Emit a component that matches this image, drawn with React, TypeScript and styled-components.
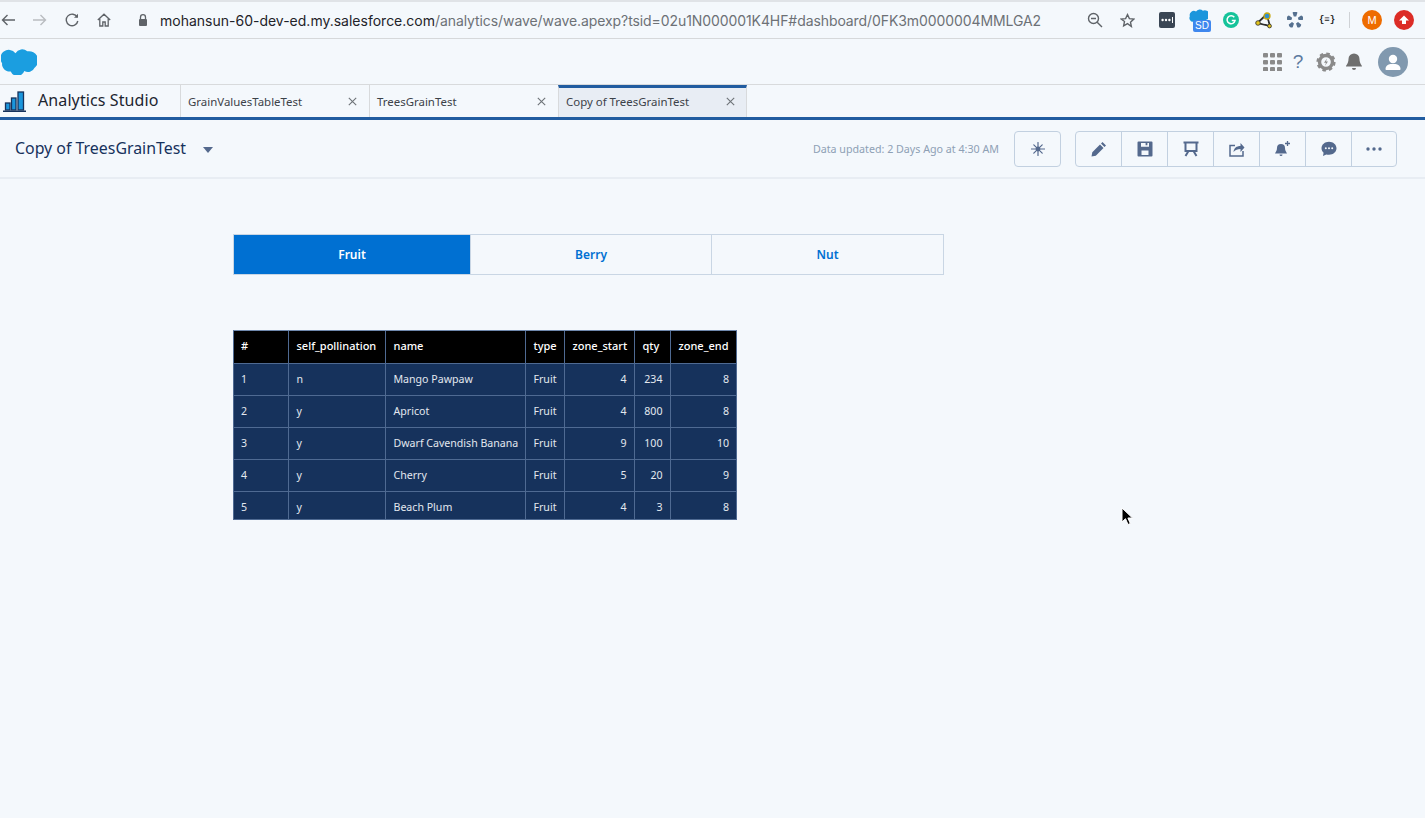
import React from 'react';
import styled, { createGlobalStyle } from 'styled-components';

const UI_FONT = '"Noto Sans", "Open Sans", sans-serif';

const GlobalStyle = createGlobalStyle`
  html, body {
    margin: 0;
    padding: 0;
    background: #f4f8fc;
  }
  * { box-sizing: border-box; }
`;

const Page = styled.div`
  position: relative;
  width: 1425px;
  height: 818px;
  overflow: hidden;
  background: #f4f8fc;
  font-family: ${UI_FONT};
`;

const BrowserBar = styled.div`
  height: 39px;
  display: flex;
  align-items: center;
  border-top: 2px solid #e0e3e7;
  border-bottom: 1px solid #d6d8da;
  padding-right: 5px;
`;

const NavGroup = styled.div`
  display: flex;
  margin-left: -8px;
`;

const Slot = styled.div`
  width: 32px;
  height: 32px;
  display: flex;
  align-items: center;
  justify-content: center;
  flex: none;
`;

const Lock = styled.svg`
  margin-left: 17px;
  margin-right: 11px;
  flex: none;
`;

const Url = styled.div`
  font-family: "Inter", sans-serif;
  font-size: 14px;
  color: #1f2329;
  white-space: nowrap;
  flex: 1;

  span {
    color: #6d7176;
    letter-spacing: -0.085px;
  }
`;

const ExtensionGroup = styled.div`
  display: flex;
  align-items: center;
  margin-left: 8px;
`;

const ExtSeparator = styled.div`
  width: 1px;
  height: 16px;
  background: #cfd2d6;
  margin: 0 6px;
`;

const SdWrap = styled.div`
  position: relative;
  width: 26px;
  height: 26px;
  margin-left: 4px;
`;

const SdCloud = styled.svg`
  position: absolute;
  left: 0;
  top: 2px;
`;

const SdBadge = styled.span`
  position: absolute;
  left: 5px;
  top: 13px;
  width: 18px;
  height: 12px;
  border-radius: 2px;
  background: #3f87ee;
  color: #fff;
  font: 10px/12px "Liberation Sans", sans-serif;
  text-align: center;
`;

const JsonMark = styled.span`
  font: 700 9px "Liberation Mono", monospace;
  color: #222;
  white-space: nowrap;
`;

const Avatar = styled.div<{ $bg: string }>`
  width: 20px;
  height: 20px;
  border-radius: 50%;
  background: ${(p) => p.$bg};
  color: #fff;
  font: 11px/20px "Liberation Sans", sans-serif;
  text-align: center;
`;

const UploadArrow = styled.svg`
  margin-top: 5px;
`;

const OrgHeader = styled.div`
  height: 46px;
  display: flex;
  align-items: center;
  justify-content: space-between;
  border-bottom: 1px solid #d8dadc;
  padding: 0 17px 0 1px;
`;

const OrgActions = styled.div`
  display: flex;
  align-items: center;
`;

const OrgIcon = styled.div<{ $w: number }>`
  width: ${(p) => p.$w}px;
  display: flex;
  justify-content: center;
  align-items: center;
  color: #8a8a8a;
`;

const HelpMark = styled.span`
  font: 19px/1 "Liberation Sans", sans-serif;
  color: #5d7a9f;
`;

const UserBubble = styled.div`
  width: 30px;
  height: 30px;
  margin-left: 11px;
  border-radius: 50%;
  background: #8199af;
  display: flex;
  align-items: center;
  justify-content: center;
`;

const TabBar = styled.div`
  height: 35px;
  display: flex;
  border-bottom: 3px solid #215ca0;
`;

const Brand = styled.div`
  width: 180px;
  display: flex;
  align-items: center;
  padding-left: 3px;
  flex: none;
`;

const BrandName = styled.span`
  margin-left: 12px;
  padding-bottom: 2px;
  font-size: 16px;
  letter-spacing: 0.1px;
  color: #1c2530;
`;

const Tab = styled.div<{ $active?: boolean }>`
  width: 189px;
  display: flex;
  align-items: center;
  justify-content: space-between;
  padding: ${(p) => (p.$active ? '0 11px 3px 7px' : '0 12px 0 7px')};
  border-left: 1px solid #d8dadc;
  font-size: 11.45px;
  color: #3c4249;
  background: ${(p) => (p.$active ? '#e8edf4' : 'transparent')};
  ${(p) => p.$active && 'border-top: 3px solid #215ca0; border-right: 1px solid #d8dadc;'}
`;

const CloseMark = styled.svg`
  flex: none;
`;

const DashHeader = styled.div`
  height: 59px;
  display: flex;
  align-items: center;
  padding: 0 28px 0 15px;
  border-bottom: 2px solid #e8edf3;
`;

const DashTitle = styled.div`
  font-size: 15.9px;
  color: #16325c;
  padding-bottom: 2px;
`;

const TitleCaret = styled.div`
  width: 0;
  height: 0;
  margin-left: 17px;
  margin-top: 3px;
  border-left: 5px solid transparent;
  border-right: 5px solid transparent;
  border-top: 6px solid #54698d;
`;

const Updated = styled.div`
  margin-left: auto;
  margin-right: 15px;
  margin-top: 1px;
  font-size: 10.7px;
  color: #8ea0b5;
`;

const ButtonGroup = styled.div<{ $gap?: number }>`
  display: flex;
  height: 36px;
  margin-right: ${(p) => p.$gap ?? 0}px;
  border: 1px solid #c2d0e0;
  border-radius: 4px;
`;

const ActionButton = styled.div`
  width: 46px;
  display: flex;
  align-items: center;
  justify-content: center;
  color: #54698d;
  border-left: 1px solid #c2d0e0;

  &:first-child {
    border-left: 0;
    width: 45px;
  }

  &:last-child:not(:first-child) {
    width: 45px;
  }
`;

const Content = styled.main`
  padding: 55px 0 0 233px;
`;

const Toggle = styled.div`
  display: flex;
  width: 711px;
  height: 41px;
  border: 1px solid #c9d6e4;
`;

const ToggleItem = styled.div<{ $active?: boolean; $w: number }>`
  width: ${(p) => p.$w}px;
  display: flex;
  align-items: center;
  justify-content: center;
  font-size: 12px;
  font-weight: 600;
  color: ${(p) => (p.$active ? '#ffffff' : '#0070d2')};
  background: ${(p) => (p.$active ? '#0070d2' : 'transparent')};
  border-left: ${(p) => (p.$active ? '0' : '1px solid #c9d6e4')};
`;

const TableClip = styled.div`
  width: 504px;
  height: 190px;
  margin-top: 55px;
  overflow: hidden;
  border: 1px solid #4f6a92;
  border-top-color: #6f88ad;
`;

const Grid = styled.table`
  border-collapse: collapse;
  table-layout: fixed;
  width: 502px;
`;

const HeadCell = styled.th`
  height: 32px;
  padding: 0 7px 2px 8px;
  background: #000;
  color: #fff;
  font-size: 11px;
  font-weight: 500;
  text-align: left;
  white-space: nowrap;
  border-left: 1px solid #4f6a92;
  border-bottom: 1px solid #4f6a92;

  &:first-child { border-left: 0; padding-left: 7px; }
`;

const BodyCell = styled.td<{ $num?: boolean }>`
  height: 32px;
  padding: 0 7px 0 8px;
  background: #16325c;
  color: #e3e8ef;
  font-size: 10.6px;
  text-align: ${(p) => (p.$num ? 'right' : 'left')};
  white-space: nowrap;
  border-left: 1px solid #4f6a92;
  border-bottom: 1px solid #4f6a92;

  &:first-child { border-left: 0; padding-left: 7px; }
`;

const Cursor = styled.svg`
  position: absolute;
  left: 1121px;
  top: 507px;
`;

const columns = ['#', 'self_pollination', 'name', 'type', 'zone_start', 'qty', 'zone_end'];
const colWidths = [54, 97, 140, 39, 70, 36, 66];
const rows: [string, string, string, string, number, number, number][] = [
  ['1', 'n', 'Mango Pawpaw', 'Fruit', 4, 234, 8],
  ['2', 'y', 'Apricot', 'Fruit', 4, 800, 8],
  ['3', 'y', 'Dwarf Cavendish Banana', 'Fruit', 9, 100, 10],
  ['4', 'y', 'Cherry', 'Fruit', 5, 20, 9],
  ['5', 'y', 'Beach Plum', 'Fruit', 4, 3, 8],
];

const Close = () => (
  <CloseMark width="9" height="9" viewBox="0 0 9 9">
    <path d="M0.8 0.8l7.4 7.4M8.2 0.8L0.8 8.2" stroke="#6e7378" strokeWidth="1.1" />
  </CloseMark>
);

const Browser = () => (
  <BrowserBar>
    <NavGroup>
      <Slot>
        <svg width="14" height="12" viewBox="0 0 14 12" fill="none" stroke="#5f6368" strokeWidth="1.4">
          <path d="M14 6H1.5M6.5 1L1.5 6l5 5" />
        </svg>
      </Slot>
      <Slot>
        <svg width="14" height="12" viewBox="0 0 14 12" fill="none" stroke="#b9bcc0" strokeWidth="1.4">
          <path d="M0 6h12.5M7.5 1l5 5-5 5" />
        </svg>
      </Slot>
      <Slot>
        <svg width="14" height="14" viewBox="0 0 14 14" fill="none" stroke="#5f6368" strokeWidth="1.4">
          <path d="M12.2 4.2A5.8 5.8 0 1 0 12.8 8" />
          <path d="M13 0.8v4h-4" fill="#5f6368" stroke="none" />
        </svg>
      </Slot>
      <Slot>
        <svg width="14" height="14" viewBox="0 0 14 14" fill="none" stroke="#5f6368" strokeWidth="1.3">
          <path d="M0.8 7L7 1.2 13.2 7M2.8 5.8V13h3V9h2.4v4h3V5.8" />
        </svg>
      </Slot>
    </NavGroup>
    <Lock width="12" height="14" viewBox="0 0 12 14">
      <path d="M3.5 6V4.2a2.5 2.5 0 0 1 5 0V6" fill="none" stroke="#5f6368" strokeWidth="1.3" />
      <rect x="2" y="6" width="8" height="7" rx="1" fill="#5f6368" />
    </Lock>
    <Url>
      mohansun-60-dev-ed.my.salesforce.com
      <span>/analytics/wave/wave.apexp?tsid=02u1N000001K4HF#dashboard/0FK3m0000004MMLGA2</span>
    </Url>
    <Slot>
      <svg width="16" height="16" viewBox="0 0 16 16" fill="none" stroke="#5f6368" strokeWidth="1.4">
        <circle cx="6.5" cy="6.5" r="5" />
        <path d="M10.2 10.2L15 15M4 6.5h5" />
      </svg>
    </Slot>
    <Slot>
      <svg width="15" height="15" viewBox="0 0 24 24" fill="none" stroke="#5f6368" strokeWidth="2.2">
        <path d="M12 2.5l3 6.4 7 .9-5.2 4.8 1.4 7L12 17.1l-6.200 3.500 1.400-7L2 9.800l7-.9z" />
      </svg>
    </Slot>
    <ExtensionGroup>
      <Slot>
        <svg width="16" height="16" viewBox="0 0 16 16">
          <rect width="16" height="16" rx="2" fill="#3a4654" />
          <circle cx="3.600" cy="8" r="1.200" fill="#fff" />
          <circle cx="7" cy="8" r="1.200" fill="#fff" />
          <circle cx="10.400" cy="8" r="1.200" fill="#fff" />
          <rect x="13" y="5" width="1" height="6" fill="#fff" />
        </svg>
      </Slot>
      <Slot>
        <SdWrap>
          <SdCloud width="20" height="15" viewBox="3 0 30 23">
            <path d="M15 4a6.500 6.500 0 0 1 10.500-1.200A7.500 7.500 0 1 1 30 17a5.800 5.800 0 0 1-7.500 2.400 6.500 6.500 0 0 1-12 .3A6 6 0 0 1 5.500 11 6.300 6.300 0 0 1 15 4z" fill="#1b96dc" />
          </SdCloud>
          <SdBadge>SD</SdBadge>
        </SdWrap>
      </Slot>
      <Slot>
        <svg width="16" height="16" viewBox="0 0 16 16">
          <circle cx="8" cy="8" r="8" fill="#15c39a" />
          <path d="M11.300 5.300A4 4 0 1 0 12 8.600H8.800" fill="none" stroke="#fff" strokeWidth="1.500" />
        </svg>
      </Slot>
      <Slot>
        <svg width="17" height="17" viewBox="0 0 17 17" fill="none">
          <path d="M2.500 11L11.500 2.500 15 14z" stroke="#2d2d2d" strokeWidth="1.800" />
          <path d="M4.500 10.800l6.500-6 2.400 7.600z" fill="#f4f8fc" />
          <circle cx="12" cy="4" r="3" fill="#2f8fcf" stroke="#c9a80f" strokeWidth="1.300" />
          <circle cx="3" cy="11" r="2.300" fill="#e3c51c" stroke="#2d2d2d" strokeWidth=".8" />
          <circle cx="14.500" cy="14" r="1.900" fill="#e3c51c" stroke="#2d2d2d" strokeWidth=".8" />
        </svg>
      </Slot>
      <Slot>
        <svg width="16" height="16" viewBox="0 0 16 16" fill="#55708f">
          {[0, 72, 144, 216, 288].map((a) => (
            <g key={a} transform={`rotate(${a} 8 8)`}>
              <path d="M5.600 0.800a2.800 2.800 0 0 1 4.800 0L9.200 4.600H6.800z" />
            </g>
          ))}
        </svg>
      </Slot>
      <Slot>
        <JsonMark>{'{≡}'}</JsonMark>
      </Slot>
      <ExtSeparator />
      <Slot>
        <Avatar $bg="#ee6c00">M</Avatar>
      </Slot>
      <Slot>
        <Avatar $bg="#dc2c26">
          <UploadArrow width="10" height="10" viewBox="0 0 10 10">
            <path d="M5 0.500L10 5.500H7v3.500H3V5.500H0z" fill="#fff" />
          </UploadArrow>
        </Avatar>
      </Slot>
    </ExtensionGroup>
  </BrowserBar>
);

const OrgBar = () => (
  <OrgHeader>
    <svg width="36" height="26" viewBox="3 1 30 22">
      <path d="M15 4.500a6.500 6.500 0 0 1 10-1.500 7.800 7.800 0 0 1 6 14 5.800 5.800 0 0 1-8.500 2.600 6.200 6.200 0 0 1-11.500 .4A6.300 6.300 0 0 1 3.700 13 6.400 6.400 0 0 1 15 4.500z" fill="#1b9ee0" />
    </svg>
    <OrgActions>
      <OrgIcon $w={26}>
        <svg width="19" height="18" viewBox="0 0 19 18" fill="#8a8a8a">
          {[0, 7, 14].map((y) =>
            [0, 7, 14].map((x) => <rect key={`${x}-${y}`} x={x} y={y} width="5" height="4.500" rx="1" />),
          )}
        </svg>
      </OrgIcon>
      <OrgIcon $w={26}>
        <HelpMark>?</HelpMark>
      </OrgIcon>
      <OrgIcon $w={30}>
        <svg width="20" height="20" viewBox="0 0 20 20">
          <circle cx="10" cy="10" r="6.500" fill="none" stroke="#8a8a8a" strokeWidth="3.400" />
          <circle cx="10" cy="10" r="8.400" fill="none" stroke="#8a8a8a" strokeWidth="2.400" strokeDasharray="3.500 3.100" />
          <path d="M11 6.500L8 10.800h2l-1 3 3-4.300h-2z" fill="#8a8a8a" />
        </svg>
      </OrgIcon>
      <OrgIcon $w={26}>
        <svg width="18" height="18" viewBox="0 0 18 18" fill="#6f6f6f">
          <path d="M9 0.500a5.500 5.500 0 0 0-5.500 5.500c0 4.500-2.500 6-2.500 7.500h16c0-1.500-2.500-3-2.500-7.500A5.500 5.500 0 0 0 9 0.500z" />
          <path d="M7 15h4a2 2 0 0 1-4 0z" />
        </svg>
      </OrgIcon>
      <UserBubble>
        <svg width="18" height="18" viewBox="0 0 18 18" fill="#fff">
          <circle cx="9" cy="6" r="4.200" />
          <path d="M1.500 16c0-3 2.500-4.500 5-5h5c2.500 .5 5 2 5 5 0 .6-.4 1-1 1h-13c-.6 0-1-.4-1-1z" />
        </svg>
      </UserBubble>
    </OrgActions>
  </OrgHeader>
);

const Tabs = () => (
  <TabBar>
    <Brand>
      <svg width="23" height="23" viewBox="0 0 23 23">
        <rect x="2.500" y="13" width="4.500" height="7" fill="#1b96dc" stroke="#16325c" strokeWidth="1.300" />
        <rect x="8.500" y="8" width="4.500" height="12" fill="#1b96dc" stroke="#16325c" strokeWidth="1.300" />
        <rect x="15" y="2" width="5.500" height="18" fill="#1b96dc" stroke="#16325c" strokeWidth="1.300" />
        <rect x="0" y="20.500" width="23" height="1.500" fill="#16325c" />
      </svg>
      <BrandName>Analytics Studio</BrandName>
    </Brand>
    <Tab>
      GrainValuesTableTest
      <Close />
    </Tab>
    <Tab>
      TreesGrainTest
      <Close />
    </Tab>
    <Tab $active>
      Copy of TreesGrainTest
      <Close />
    </Tab>
  </TabBar>
);

const DashboardHeader = () => (
  <DashHeader>
    <DashTitle>Copy of TreesGrainTest</DashTitle>
    <TitleCaret />
    <Updated>Data updated: 2 Days Ago at 4:30 AM</Updated>
    <ButtonGroup $gap={14}>
      <ActionButton>
        <svg width="14" height="14" viewBox="0 0 14 14" stroke="#54698d" strokeWidth="1.200" strokeLinecap="round">
          <path d="M7 .5v13M.5 7h13M2.800 2.800l8.400 8.400M11.200 2.800l-8.400 8.400" />
          <circle cx="7" cy="7" r="2.400" fill="#54698d" stroke="none" />
        </svg>
      </ActionButton>
    </ButtonGroup>
    <ButtonGroup>
      <ActionButton>
        <svg width="16" height="16" viewBox="0 0 16 16" fill="#54698d">
          <path d="M11.500 1L15 4.500 13.500 6 10 2.500zM9 3.500L12.500 7l-7.700 7.700L0.500 15.500l.8-4.300z" />
        </svg>
      </ActionButton>
      <ActionButton>
        <svg width="16" height="16" viewBox="0 0 16 16" fill="#54698d">
          <path d="M1.500 0.500h13a1 1 0 0 1 1 1v13a1 1 0 0 1-1 1h-13a1 1 0 0 1-1-1v-13a1 1 0 0 1 1-1zM4 2v3.700h8V2h-1.600v2.200H8.600V2zM4.500 9.500v4.500h7V9.500z" fillRule="evenodd" />
        </svg>
      </ActionButton>
      <ActionButton>
        <svg width="16" height="16" viewBox="0 0 16 16" fill="none" stroke="#54698d" strokeWidth="2">
          <path d="M0.500 1.500h15M2.500 1.500v8.500h11V1.500M5.500 10l-3 5M10.500 10l3 5" />
        </svg>
      </ActionButton>
      <ActionButton>
        <svg width="16" height="16" viewBox="0 0 16 16" fill="none" stroke="#54698d" strokeWidth="1.500">
          <path d="M6 4.500H1v10.500h13v-5" />
          <path d="M4.500 11c.5-4 3-6 7-6V2l4 4.500-4 4.500V8c-3 0-5 .8-7 3z" fill="#54698d" stroke="none" />
        </svg>
      </ActionButton>
      <ActionButton>
        <svg width="17" height="16" viewBox="0 0 17 16" fill="#54698d">
          <path d="M7 3a4 4 0 0 0-4 4c0 3-1.500 4-2 5.500h12c-.5-1.500-2-2.500-2-5.500a4 4 0 0 0-4-4zM5.500 13.500h3a1.500 1.500 0 0 1-3 0z" />
          <path d="M13.500 0v5M11 2.500h5" stroke="#54698d" strokeWidth="1.300" />
        </svg>
      </ActionButton>
      <ActionButton>
        <svg width="16" height="16" viewBox="0 0 16 16">
          <path d="M8 0.800c4.200 0 7.500 2.900 7.500 6.500S12.200 13.800 8 13.800c-1 0-1.900-.1-2.700-.4L2 15l.6-3.300C1.300 10.500.5 9 .5 7.300.5 3.700 3.800.8 8 .8z" fill="#54698d" />
          <circle cx="4.800" cy="7.300" r="1" fill="#f4f8fc" />
          <circle cx="8" cy="7.300" r="1" fill="#f4f8fc" />
          <circle cx="11.200" cy="7.300" r="1" fill="#f4f8fc" />
        </svg>
      </ActionButton>
      <ActionButton>
        <svg width="16" height="4" viewBox="0 0 16 4" fill="#54698d">
          <circle cx="2" cy="2" r="1.700" />
          <circle cx="8" cy="2" r="1.700" />
          <circle cx="14" cy="2" r="1.700" />
        </svg>
      </ActionButton>
    </ButtonGroup>
  </DashHeader>
);

export default function App() {
  return (
    <Page>
      <GlobalStyle />
      <Browser />
      <OrgBar />
      <Tabs />
      <DashboardHeader />
      <Content>
        <Toggle>
          <ToggleItem $active $w={236}>Fruit</ToggleItem>
          <ToggleItem $w={241}>Berry</ToggleItem>
          <ToggleItem $w={232}>Nut</ToggleItem>
        </Toggle>
        <TableClip>
          <Grid>
            <colgroup>
              {colWidths.map((w, i) => (
                <col key={i} style={{ width: w }} />
              ))}
            </colgroup>
            <thead>
              <tr>
                {columns.map((c) => (
                  <HeadCell key={c}>{c}</HeadCell>
                ))}
              </tr>
            </thead>
            <tbody>
              {rows.map((r) => (
                <tr key={r[0]}>
                  {r.map((v, i) => (
                    <BodyCell key={i} $num={typeof v === 'number'}>
                      {v}
                    </BodyCell>
                  ))}
                </tr>
              ))}
            </tbody>
          </Grid>
        </TableClip>
      </Content>
      <Cursor width="13" height="19" viewBox="0 0 13 19">
        <path d="M1 1v14l3.500-3.300L7 17.500l2.300-1-2.400-5.500H11.500z" fill="#000" stroke="#fff" strokeWidth="1" />
      </Cursor>
    </Page>
  );
}
